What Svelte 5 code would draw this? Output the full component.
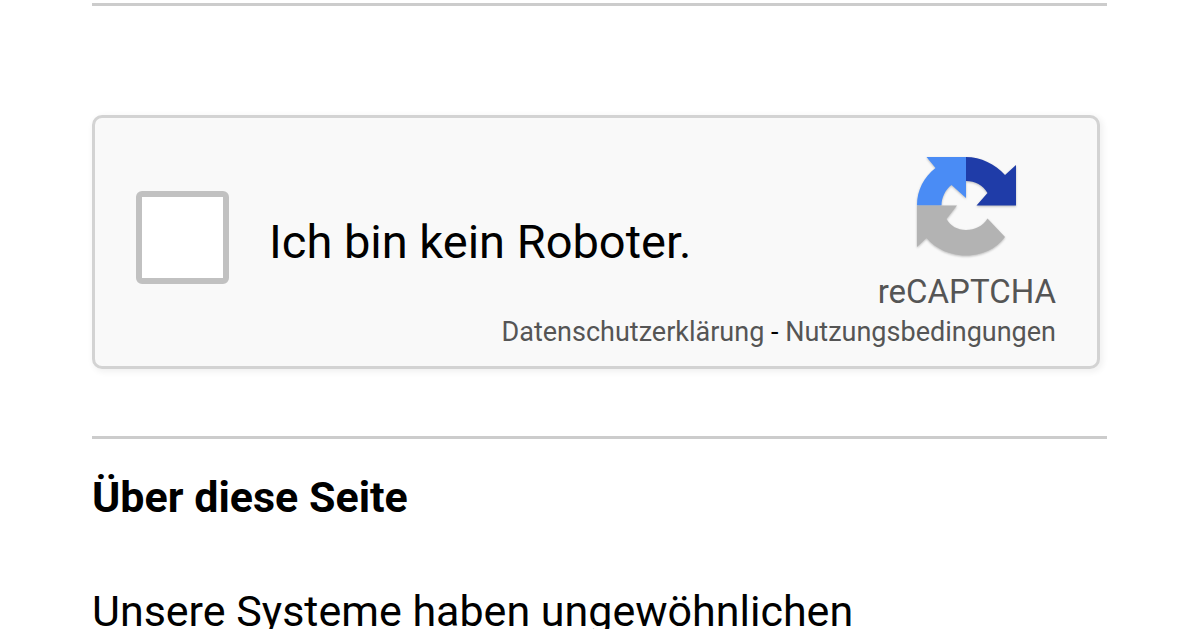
<script>
  let checked = $state(false);
</script>

<main>
  <hr />

  <section class="captcha" aria-label="reCAPTCHA">
    <label class="check">
      <input type="checkbox" bind:checked />
      <span>Ich bin kein Roboter.</span>
    </label>

    <div class="brand">
      <svg viewBox="0 0 99 100" aria-hidden="true">
        <path fill="#4a8cf5" d="M49 1H9.500l9 11C7 21 0 34 0 49.500h24.500c0-8 4-16 10-20.500L49 42Z" />
        <path fill="#1f3ca8" d="M49 1c15 0 29 7 39 18l11-10v40.500H59.500L70.500 37C66 29 58 25 49 25Z" />
        <path fill="#b3b3b3" d="M0 49.500h40L29.500 63c4 7 11 11 19.500 11 9 0 17-4 21.500-11.500L88 81c-9 12-23 18.500-39 18.500S19 93 9.500 82L0 91Z" />
      </svg>
      <span>reCAPTCHA</span>
    </div>

    <div class="links">
      <a href="#privacy">Datenschutzerklärung</a> - <a href="#terms">Nutzungsbedingungen</a>
    </div>
  </section>

  <hr />

  <h1>Über diese Seite</h1>
  <p>Unsere Systeme haben ungewöhnlichen</p>
</main>

<style>
  :global(body) {
    background: #fff;
    overflow: hidden;
  }

  main {
    padding: 3px 93px 0 92px;
    font-family: Roboto, sans-serif;
    font-size: 43px;
    line-height: 52px;
    color: #000;
  }

  hr {
    height: 3px;
    margin: 0;
    border: 0;
    background: #ccc;
  }

  .captcha {
    display: grid;
    grid-template-columns: 1fr auto;
    margin: 109px 7px 67px 0;
    padding: 38px 41px 14px;
    border: 3px solid #d3d3d3;
    border-radius: 10px;
    background: #f9f9f9;
    box-shadow: 2px 2px 6px 1px rgba(0, 0, 0, 0.06);
  }

  .check {
    display: flex;
    align-items: center;
    align-self: start;
    gap: 40px;
    padding-top: 35px;
    font-size: 47px;
  }

  .check span {
    padding-top: 8px;
  }

  .check input {
    appearance: none;
    box-sizing: border-box;
    flex: none;
    width: 93px;
    height: 93px;
    margin: 0;
    border: 6px solid #c1c1c1;
    border-radius: 6px;
    background: #fff;
  }

  .check input:checked {
    background: #4a8cf5;
  }

  .brand {
    display: flex;
    flex-direction: column;
    align-items: center;
    gap: 16px;
    font-size: 33px;
    line-height: 40px;
    color: #555;
  }

  .brand svg {
    width: 99px;
    height: 100px;
    filter: drop-shadow(0 1px 1px rgba(0, 0, 0, 0.25));
  }

  .links {
    grid-column: 1 / -1;
    text-align: right;
    font-size: 27px;
    line-height: 40px;
    color: #000;
  }

  .links a {
    color: #555;
    text-decoration: none;
  }

  h1 {
    margin: 32px 0 62px;
    font-size: inherit;
    font-weight: 700;
  }

  p {
    margin: 0;
  }
</style>
